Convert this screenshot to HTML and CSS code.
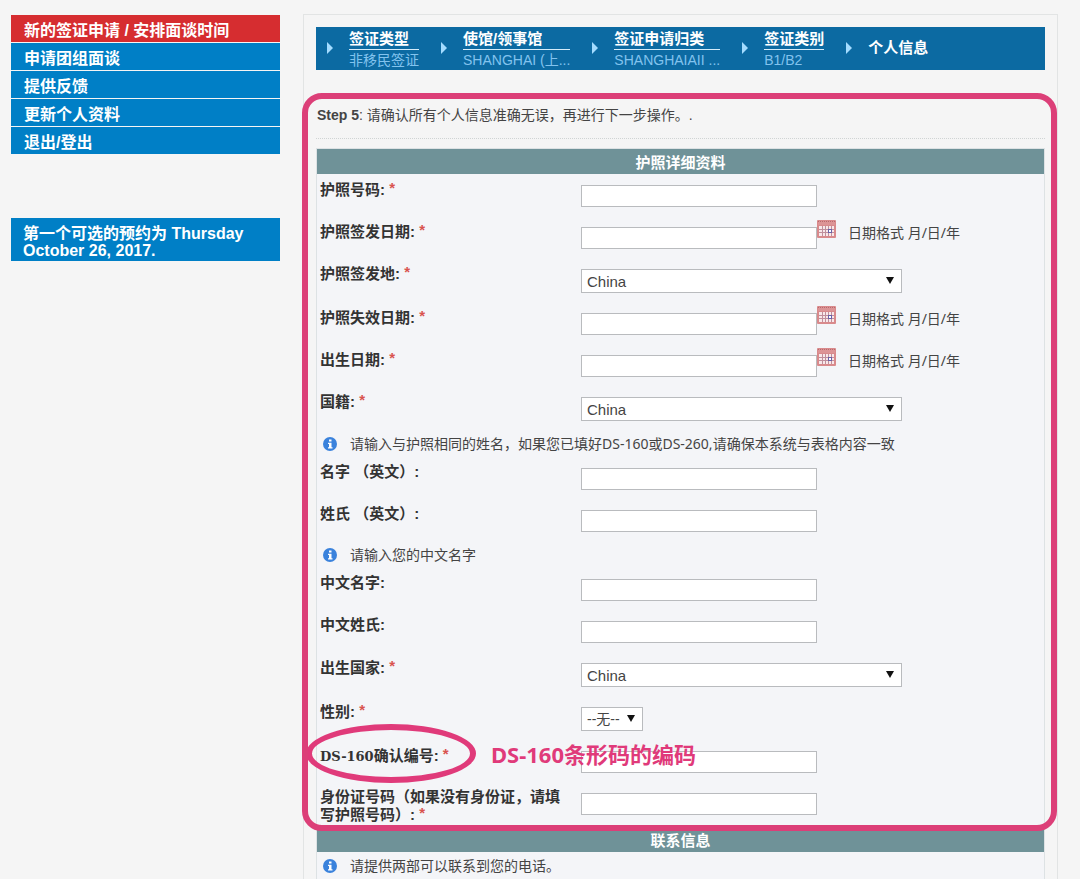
FILE: index.html
```html
<!DOCTYPE html>
<html lang="zh-CN">
<head>
<meta charset="utf-8">
<title>个人信息</title>
<link rel="stylesheet" href="styles.css">
</head>
<body>
<svg class="sprite" aria-hidden="true">
	<symbol id="calendar" viewBox="0 0 19 18">
		<rect x="0" y="0" width="19" height="18" rx="1" fill="#d98a8c"/>
		<rect x="1" y="1" width="17" height="4" fill="#dc9496"/>
		<path d="M1 1.5h17" stroke="#b8696c" stroke-dasharray="1 1"/>
		<rect x="2" y="6" width="15" height="10" fill="#f8e8ea"/>
		<path d="M2 9.5h15M2 12.5h15M5.5 6v10M8.5 6v10M11.5 6v10M14.5 6v10" stroke="#c08f9c"/>
		<rect x="11.5" y="9.5" width="3" height="3" fill="#fff" stroke="#6a62a8"/>
	</symbol>
	<symbol id="info" viewBox="0 0 14 14">
		<circle cx="7" cy="7" r="7" fill="#3a82dc"/>
		<path d="M6 2.5h2.5v2H6zM5 5.8h3.500v4.5h1v1.200H5v-1.200h1V7H5z" fill="#fff"/>
	</symbol>
</svg>

<div class="page">
	<div class="sidebar">
		<ul class="menu">
			<li><a href="#" class="active">新的签证申请 / 安排面谈时间</a></li>
			<li><a href="#">申请团组面谈</a></li>
			<li><a href="#">提供反馈</a></li>
			<li><a href="#">更新个人资料</a></li>
			<li><a href="#">退出/登出</a></li>
		</ul>
		<p class="notice">第一个可选的预约为 Thursday October 26, 2017.</p>
	</div>

	<div class="main">
		<ol class="steps">
			<li><a href="#">签证类型</a><span>非移民签证</span></li>
			<li><a href="#">使馆/领事馆</a><span>SHANGHAI (上...</span></li>
			<li><a href="#">签证申请归类</a><span>SHANGHAIAII ...</span></li>
			<li><a href="#">签证类别</a><span>B1/B2</span></li>
			<li class="current">个人信息</li>
		</ol>

		<form>
			<div class="section">
				<p class="intro"><b>Step 5</b>: 请确认所有个人信息准确无误，再进行下一步操作。.</p>
				<div class="box">
					<h2>护照详细资料</h2>
					<div class="row">
						<label for="passport">护照号码: <em>*</em></label>
						<div class="field"><input type="text" id="passport"></div>
					</div>
					<div class="row">
						<label for="issued">护照签发日期: <em>*</em></label>
						<div class="field">
							<input type="text" id="issued">
							<button type="button" class="cal" aria-label="日期"><svg><use href="#calendar"/></svg></button>
							<span class="hint">日期格式 月/日/年</span>
						</div>
					</div>
					<div class="row">
						<label for="place">护照签发地: <em>*</em></label>
						<div class="field"><span class="select"><select id="place"><option>China</option></select></span></div>
					</div>
					<div class="row">
						<label for="expires">护照失效日期: <em>*</em></label>
						<div class="field">
							<input type="text" id="expires">
							<button type="button" class="cal" aria-label="日期"><svg><use href="#calendar"/></svg></button>
							<span class="hint">日期格式 月/日/年</span>
						</div>
					</div>
					<div class="row">
						<label for="birth">出生日期: <em>*</em></label>
						<div class="field">
							<input type="text" id="birth">
							<button type="button" class="cal" aria-label="日期"><svg><use href="#calendar"/></svg></button>
							<span class="hint">日期格式 月/日/年</span>
						</div>
					</div>
					<div class="row">
						<label for="nationality">国籍: <em>*</em></label>
						<div class="field"><span class="select"><select id="nationality"><option>China</option></select></span></div>
					</div>
					<p class="info"><svg><use href="#info"/></svg>请输入与护照相同的姓名，如果您已填好DS-160或DS-260,请确保本系统与表格内容一致</p>
					<div class="row">
						<label for="first">名字 （英文）:</label>
						<div class="field"><input type="text" id="first"></div>
					</div>
					<div class="row">
						<label for="last">姓氏 （英文）:</label>
						<div class="field"><input type="text" id="last"></div>
					</div>
					<p class="info"><svg><use href="#info"/></svg>请输入您的中文名字</p>
					<div class="row">
						<label for="first-cn">中文名字:</label>
						<div class="field"><input type="text" id="first-cn"></div>
					</div>
					<div class="row">
						<label for="last-cn">中文姓氏:</label>
						<div class="field"><input type="text" id="last-cn"></div>
					</div>
					<div class="row">
						<label for="country">出生国家: <em>*</em></label>
						<div class="field"><span class="select"><select id="country"><option>China</option></select></span></div>
					</div>
					<div class="row">
						<label for="sex">性别: <em>*</em></label>
						<div class="field"><span class="select short"><select id="sex"><option>--无--</option></select></span></div>
					</div>
					<div class="row marked">
						<label for="ds160"><span class="code">DS-160</span>确认编号: <em>*</em></label>
						<div class="field"><input type="text" id="ds160"></div>
						<span class="circle"></span>
						<strong class="note">DS-160条形码的编码</strong>
					</div>
					<div class="row">
						<label for="idcard">身份证号码（如果没有身份证，请填写护照号码）: <em>*</em></label>
						<div class="field"><input type="text" id="idcard"></div>
					</div>
				</div>
				<div class="frame"></div>
			</div>

			<div class="box contact">
				<h2>联系信息</h2>
				<p class="info"><svg><use href="#info"/></svg>请提供两部可以联系到您的电话。</p>
			</div>
		</form>
	</div>
</div>
</body>
</html>
```

FILE: styles.css
```css
* {
	box-sizing: border-box;
}
body {
	margin: 0;
	background: #f5f5f5;
	color: #444;
	font: 14px/17px "Liberation Sans", "Noto Sans CJK SC", sans-serif;
}
ul, ol, p, h2 {
	margin: 0;
	padding: 0;
	list-style: none;
}
.sprite {
	display: none;
}
.page {
	display: flex;
	gap: 23px;
	padding: 14px 22px 0 11px;
}

/* left column */
.sidebar {
	flex: none;
	width: 269px;
	padding-top: 1px;
}
.menu {
	display: grid;
	gap: 1px;
}
.menu a {
	display: block;
	height: 27px;
	padding-left: 13px;
	background: #007fc6;
	color: #fff;
	font-size: 16px;
	font-weight: bold;
	line-height: 31px;
	text-decoration: none;
}
.menu a.active {
	background: #d62d30;
}
.notice {
	margin-top: 64px;
	padding: 7px 12px 2px;
	background: #007fc6;
	color: #fff;
	font-size: 16px;
	font-weight: bold;
	line-height: 17px;
}

/* right column */
.main {
	flex: 1;
	min-height: calc(100vh - 14px);
	padding: 12px 12px 0;
	border: 1px solid #e2e4e4;
	border-bottom: 0;
}
.steps {
	display: flex;
	height: 43px;
	padding-left: 11px;
	background: #0c6aa2;
	color: #fff;
}
.steps li {
	display: flex;
	flex-direction: column;
	position: relative;
	padding: 2px 0 0 22px;
	margin-right: 22px;
}
.steps li::before {
	content: "";
	position: absolute;
	left: 0;
	top: 15px;
	border-left: 6px solid #a4dcff;
	border-top: 6px solid transparent;
	border-bottom: 6px solid transparent;
}
.steps a {
	height: 21px;
	border-bottom: 1px solid #d5ecfa;
	color: #fff;
	font-size: 15px;
	font-weight: bold;
	line-height: 20px;
	text-decoration: none;
}
.steps span {
	color: #82c3ee;
	line-height: 20px;
}
.steps .current {
	font-size: 15px;
	font-weight: bold;
	line-height: 37px;
}
.section {
	position: relative;
	margin-top: 24px;
}
.intro {
	margin-bottom: 9px;
	padding: 10px 0 12px 1px;
	border-bottom: 1px dotted #d0d4d4;
	line-height: 22px;
}
.box {
	border: 1px solid #dde2e4;
	border-bottom: 0;
	background: #f4f5f8;
}
.box h2 {
	height: 25px;
	background: #6f9298;
	color: #fff;
	font-size: 15px;
	line-height: 27px;
	text-align: center;
}
.contact {
	border-top: 0;
}
.row {
	display: grid;
	grid-template-columns: 264px 1fr;
	min-height: 42px;
}
.row label {
	padding: 6px 16px 4px 3px;
	color: #333;
	font-size: 15px;
	font-weight: bold;
}
.row em {
	color: #d9534f;
	font-style: normal;
	line-height: 1;
	vertical-align: 2px;
}
.row .code {
	font-family: "DejaVu Serif", serif;
	font-size: 13px;
}
.field {
	display: flex;
	align-items: flex-start;
	padding-top: 4px;
}
.field input {
	width: 236px;
	height: 22px;
	margin: 7px 0 0;
	border: 1px solid #b9bbbe;
	background: #fff;
}
.select {
	position: relative;
	width: 321px;
	margin: 7px 0 9px;
}
.select::after {
	content: "";
	position: absolute;
	right: 8px;
	top: 8px;
	border-top: 7px solid #111;
	border-left: 4px solid transparent;
	border-right: 4px solid transparent;
	pointer-events: none;
}
.select select {
	display: block;
	width: 100%;
	height: 24px;
	padding: 0 5px;
	border: 1px solid #b9bbbe;
	border-radius: 0;
	background: #fff;
	color: #444;
	font: 15px "Liberation Sans", "Noto Sans CJK SC", sans-serif;
	appearance: none;
}
.select.short {
	width: 62px;
}
.short select {
	font-size: 14px;
}
.cal {
	width: 19px;
	height: 18px;
	padding: 0;
	border: 0;
	background: none;
}
.cal svg {
	display: block;
	width: 19px;
	height: 18px;
}
.hint {
	margin-left: 12px;
	font-family: "Noto Sans", "Noto Sans CJK SC", sans-serif;
	line-height: 26px;
}
.info {
	display: flex;
	align-items: center;
	gap: 13px;
	height: 27px;
	padding-left: 6px;
	font-family: "Noto Sans", "Noto Sans CJK SC", sans-serif;
}
.info svg {
	width: 14px;
	height: 14px;
}

/* pink marks over the form */
.frame {
	position: absolute;
	inset: -1px -12px -4px -14px;
	border: 6px solid #dc3f78;
	border-radius: 20px;
	pointer-events: none;
}
.marked {
	position: relative;
}
.circle {
	position: absolute;
	left: -11px;
	top: -16px;
	width: 170px;
	height: 59px;
	border: 6px solid #e03a7a;
	border-radius: 50%;
	pointer-events: none;
}
.note {
	position: absolute;
	left: 174px;
	top: 0;
	color: #e03a7a;
	font: bold 22px/28px "Noto Sans", "Noto Sans CJK SC", sans-serif;
	pointer-events: none;
}
```
